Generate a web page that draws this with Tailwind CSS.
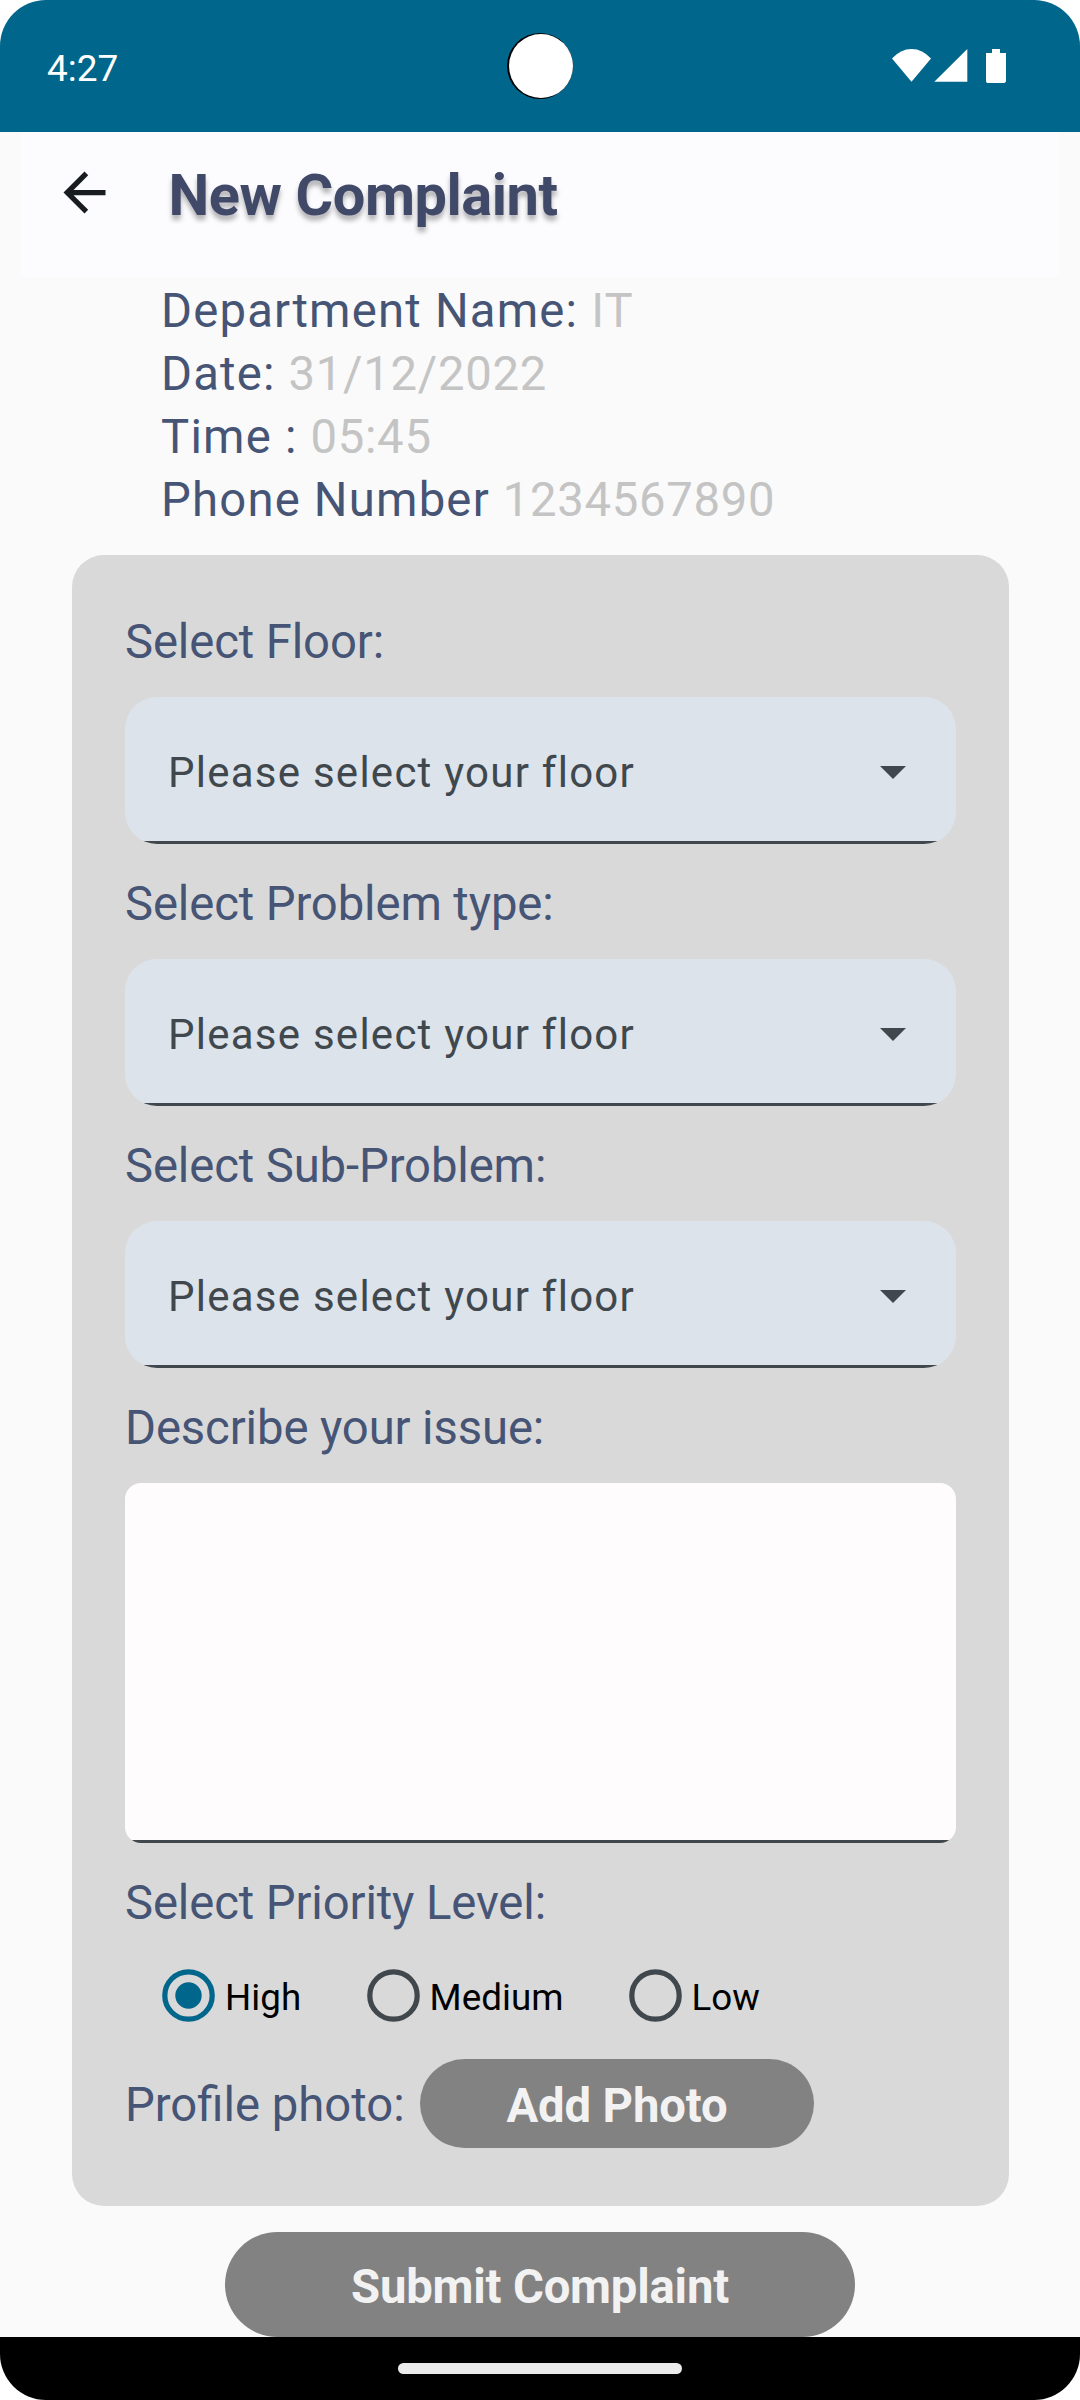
<!DOCTYPE html>
<html lang="en">
<head>
<meta charset="utf-8">
<title>New Complaint</title>
<script src="https://cdn.jsdelivr.net/npm/@tailwindcss/browser@4"></script>
</head>
<body class="bg-white">
<div class="flex h-[2400px] w-[1080px] flex-col overflow-hidden rounded-[46px] bg-[#fafafa] font-['Roboto',sans-serif]">

  <!-- Status bar -->
  <header class="relative flex h-[132px] shrink-0 items-center justify-between bg-[#00668b] pr-[74px] pl-[47px] text-white">
    <span class="pt-[5px] text-[37px] leading-[44px]">4:27</span>
    <svg class="absolute top-[33px] left-[507px]" width="66" height="66" viewBox="0 0 66 66"><circle cx="33" cy="33" r="33" fill="#000"/><circle cx="34" cy="33" r="32" fill="#fff"/></svg>
    <svg width="114" height="34" viewBox="0 0 114 34" fill="#fff"><path d="M0 9.500Q8.500 0 19.500 0T39 9.500L19.500 32.700Z"/><path d="M75.300 0V32.700H42.300Z"/><path d="M100 0h8v4h6v28.500l-1.500 1.500h-17.500l-1-1.500V4h6Z"/></svg>
  </header>

  <!-- App bar -->
  <div class="mx-[21px] flex h-[145px] shrink-0 items-start bg-[#fcfcff]">
    <svg class="mt-[29px] ml-[31.500px] shrink-0" width="63" height="63" viewBox="0 0 24 24" fill="#191c1e"><path d="M20 11H7.830l5.590-5.590L12 4l-8 8 8 8 1.410-1.410L7.830 13H20z"/></svg>
    <h1 class="mt-[27px] ml-[53px] text-[57.750px] leading-[73px] font-bold tracking-[-0.450px] text-[#414969] [text-shadow:0_5px_5px_rgba(0,0,0,0.3)]">New Complaint</h1>
  </div>

  <!-- Request details -->
  <section class="mt-[3px] ml-[161px] shrink-0 text-[47.250px] leading-[63px] tracking-[1.200px] text-[#465475]">
    <p>Department Name: <span class="text-[#c4c4c4]">IT</span></p>
    <p>Date: <span class="tracking-[0.700px] text-[#c4c4c4]">31/12/2022</span></p>
    <p>Time : <span class="tracking-[0.700px] text-[#c4c4c4]">05:45</span></p>
    <p>Phone Number <span class="tracking-[0.700px] text-[#c4c4c4]">1234567890</span></p>
  </section>

  <!-- Form -->
  <main class="mt-[23px] ml-[72px] flex h-[1651px] w-[937px] shrink-0 flex-col rounded-[32px] bg-[#d9d9d9] px-[53px] pt-[56px] text-[47.250px] leading-[63px] tracking-[-0.120px] text-[#465475]">
    <label>Select Floor:</label>
    <div class="mt-[23px] flex h-[147px] shrink-0 items-center justify-between rounded-[32px] bg-[linear-gradient(to_top,#40484d_2.600px,#dce3ea_2.600px)] pr-[50px] pl-[43px] text-[42px] tracking-[1.250px] text-[#40484d]">
      <span class="pt-[3px]">Please select your floor</span>
      <svg class="mt-[4px]" width="26" height="13" viewBox="0 0 26 13"><path d="M0 0H26L13 13Z" fill="#40484d"/></svg>
    </div>

    <label class="mt-[29px]">Select Problem type:</label>
    <div class="mt-[23px] flex h-[147px] shrink-0 items-center justify-between rounded-[32px] bg-[linear-gradient(to_top,#40484d_2.600px,#dce3ea_2.600px)] pr-[50px] pl-[43px] text-[42px] tracking-[1.250px] text-[#40484d]">
      <span class="pt-[3px]">Please select your floor</span>
      <svg class="mt-[4px]" width="26" height="13" viewBox="0 0 26 13"><path d="M0 0H26L13 13Z" fill="#40484d"/></svg>
    </div>

    <label class="mt-[29px]">Select Sub-Problem:</label>
    <div class="mt-[23px] flex h-[147px] shrink-0 items-center justify-between rounded-[32px] bg-[linear-gradient(to_top,#40484d_2.600px,#dce3ea_2.600px)] pr-[50px] pl-[43px] text-[42px] tracking-[1.250px] text-[#40484d]">
      <span class="pt-[3px]">Please select your floor</span>
      <svg class="mt-[4px]" width="26" height="13" viewBox="0 0 26 13"><path d="M0 0H26L13 13Z" fill="#40484d"/></svg>
    </div>

    <label class="mt-[29px]">Describe your issue:</label>
    <div class="mt-[23px] h-[360px] shrink-0 rounded-[16px] bg-[linear-gradient(to_top,#40484d_2.600px,#fffcfe_2.600px)]"></div>

    <label class="mt-[29px]">Select Priority Level:</label>
    <div class="mt-[34px] ml-[37px] flex h-[53px] shrink-0 items-center text-[36.750px] leading-[44px] tracking-[0.050px] text-black">
      <div class="flex w-[204.500px] items-center gap-[10px]">
        <svg width="53" height="53" viewBox="0 0 53 53"><circle cx="26.500" cy="26.500" r="23.700" fill="none" stroke="#00668b" stroke-width="5.250"/><circle cx="26.500" cy="26.500" r="13.200" fill="#00668b"/></svg>
        <span class="pt-[5px]">High</span>
      </div>
      <div class="flex w-[262px] items-center gap-[10px]">
        <svg width="53" height="53" viewBox="0 0 53 53"><circle cx="26.500" cy="26.500" r="23.700" fill="none" stroke="#40484d" stroke-width="5.250"/></svg>
        <span class="pt-[5px]">Medium</span>
      </div>
      <div class="flex items-center gap-[10px]">
        <svg width="53" height="53" viewBox="0 0 53 53"><circle cx="26.500" cy="26.500" r="23.700" fill="none" stroke="#40484d" stroke-width="5.250"/></svg>
        <span class="pt-[5px]">Low</span>
      </div>
    </div>

    <div class="mt-[37px] flex h-[89px] shrink-0 items-center">
      <span class="w-[295px] pt-[3px] tracking-normal">Profile photo:</span>
      <button class="h-[89px] w-[394px] rounded-full bg-[#828282] pt-[5px] font-bold text-[#f2f2f2]">Add Photo</button>
    </div>
  </main>

  <button class="mx-auto mt-[26px] h-[105px] w-[630px] shrink-0 rounded-full bg-[#828282] pt-[5px] text-[47.250px] leading-[63px] font-bold tracking-[-0.200px] text-[#f2f2f2]">Submit Complaint</button>

  <!-- Gesture navigation -->
  <footer class="flex h-[63px] shrink-0 items-center justify-center bg-black">
    <div class="h-[11px] w-[284px] rounded-full bg-[#ebebeb]"></div>
  </footer>
</div>
</body>
</html>
